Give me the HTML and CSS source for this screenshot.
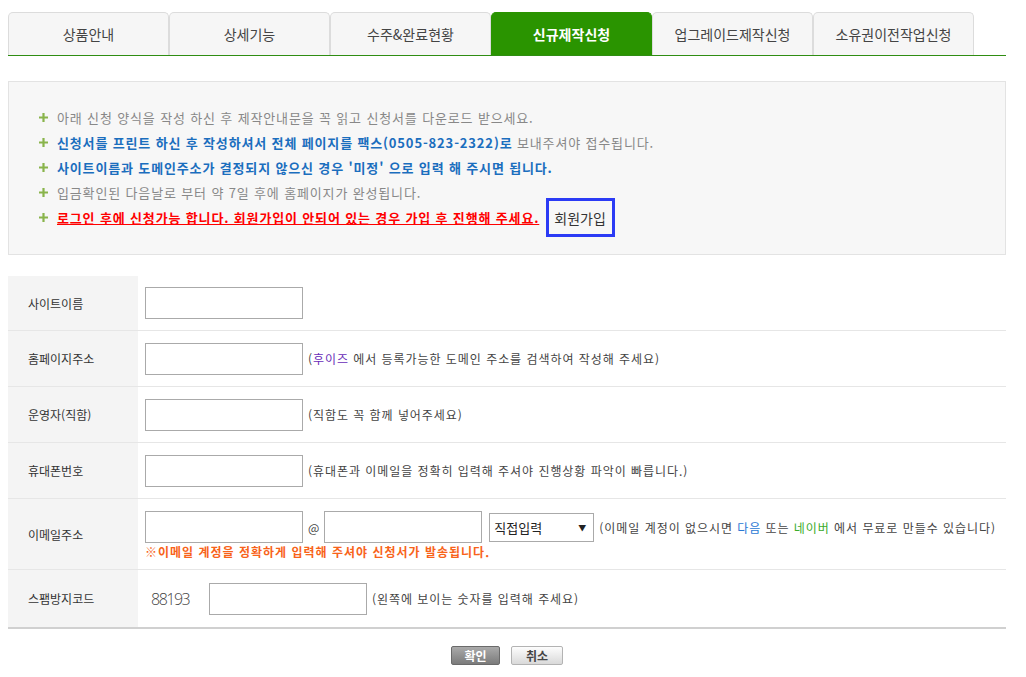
FILE: index.html
```html
<!DOCTYPE html>
<html lang="ko">
<head>
<meta charset="utf-8">
<title>신규제작신청</title>
<link rel="stylesheet" href="styles.css">
</head>
<body>
<div class="wrap">
  <ul class="tabs">
    <li class="tab">상품안내</li>
    <li class="tab">상세기능</li>
    <li class="tab">수주&amp;완료현황</li>
    <li class="tab active">신규제작신청</li>
    <li class="tab">업그레이드제작신청</li>
    <li class="tab">소유권이전작업신청</li>
  </ul>

  <div class="notice">
    <p class="nline"><svg class="plus" viewBox="0 0 9 9"><path d="M4.5 0V9M0 4.5H9"/></svg><span class="gray">아래 신청 양식을 작성 하신 후 제작안내문을 꼭 읽고 신청서를 다운로드 받으세요.</span></p>
    <p class="nline"><svg class="plus" viewBox="0 0 9 9"><path d="M4.5 0V9M0 4.5H9"/></svg><span class="blue">신청서를 프린트 하신 후 작성하셔서 전체 페이지를 팩스(0505-823-2322)로</span><span class="gray">&nbsp;보내주셔야 접수됩니다.</span></p>
    <p class="nline"><svg class="plus" viewBox="0 0 9 9"><path d="M4.5 0V9M0 4.5H9"/></svg><span class="blue">사이트이름과 도메인주소가 결정되지 않으신 경우 '미정' 으로 입력 해 주시면 됩니다.</span></p>
    <p class="nline"><svg class="plus" viewBox="0 0 9 9"><path d="M4.5 0V9M0 4.5H9"/></svg><span class="gray">입금확인된 다음날로 부터 약 7일 후에 홈페이지가 완성됩니다.</span></p>
    <p class="nline"><svg class="plus" viewBox="0 0 9 9"><path d="M4.5 0V9M0 4.5H9"/></svg><span class="red">로그인 후에 신청가능 합니다. 회원가입이 안되어 있는 경우 가입 후 진행해 주세요.</span><a class="join">회원가입</a></p>
  </div>

  <div class="form">
    <div class="row r1">
      <div class="label">사이트이름</div>
      <div class="field"><input class="txt" type="text"></div>
    </div>
    <div class="row">
      <div class="label">홈페이지주소</div>
      <div class="field"><input class="txt" type="text"><span class="help">(<span class="purple">후이즈</span> 에서 등록가능한 도메인 주소를 검색하여 작성해 주세요)</span></div>
    </div>
    <div class="row">
      <div class="label">운영자(직함)</div>
      <div class="field"><input class="txt" type="text"><span class="help">(직함도 꼭 함께 넣어주세요)</span></div>
    </div>
    <div class="row">
      <div class="label">휴대폰번호</div>
      <div class="field"><input class="txt" type="text"><span class="help">(휴대폰과 이메일을 정확히 입력해 주셔야 진행상황 파악이 빠릅니다.)</span></div>
    </div>
    <div class="row r5">
      <div class="label">이메일주소</div>
      <div class="field col">
        <div class="mailline">
          <input class="txt" type="text"><span class="at">@</span><input class="txt" type="text">
          <span class="selwrap"><select class="sel"><option>직접입력</option></select></span>
          <span class="help">(이메일 계정이 없으시면 <span class="dblue">다음</span> 또는 <span class="green">네이버</span> 에서 무료로 만들수 있습니다)</span>
        </div>
        <p class="warn">※이메일 계정을 정확하게 입력해 주셔야 신청서가 발송됩니다.</p>
      </div>
    </div>
    <div class="row r6">
      <div class="label">스팸방지코드</div>
      <div class="field"><span class="captcha">88193</span><input class="txt" type="text"><span class="help">(왼쪽에 보이는 숫자를 입력해 주세요)</span></div>
    </div>
  </div>

  <div class="btns">
    <button class="btn ok" type="button">확인</button>
    <button class="btn cancel" type="button">취소</button>
  </div>
</div>
</body>
</html>
```

FILE: styles.css
```css
* { box-sizing: border-box; }
body {
  margin: 8px;
  background: #fff;
  font-family: "Noto Sans CJK KR", "Noto Sans", sans-serif;
  color: #333;
}
.wrap { width: 998px; margin-top: 4px; }

.tabs {
  list-style: none;
  margin: 0;
  padding: 0;
  display: flex;
  border-bottom: 1px solid #2f8d12;
}
.tab {
  width: 161px;
  height: 43px;
  border: 1px solid #dcdcdc;
  border-bottom: none;
  border-radius: 5px 5px 0 0;
  background: #f6f6f6;
  color: #444;
  font-size: 14px;
  display: flex;
  align-items: center;
  justify-content: center;
}
.tab.active {
  background: #2a9400;
  border-color: #2a9400;
  color: #fff;
  font-weight: bold;
}

.notice {
  margin-top: 25px;
  height: 174px;
  border: 1px solid #e3e3e3;
  background: #f7f7f7;
  padding: 23px 0 0 30px;
  font-size: 13px;
  letter-spacing: 0.85px;
}
.nline {
  margin: 0;
  height: 25px;
  display: flex;
  align-items: center;
  white-space: nowrap;
}
.plus {
  width: 9px;
  height: 9px;
  margin-right: 9px;
  flex: none;
}
.plus path { stroke: #89b44b; stroke-width: 2.2; fill: none; }
.gray { color: #888; }
.blue { color: #1b6ebe; font-weight: bold; }
.red { color: #f00; font-weight: bold; text-decoration: underline; }
.join {
  flex: none;
  display: flex;
  align-items: center;
  height: 39px;
  margin: 0 0 0 7px;
  padding: 0 6px 0 5px;
  border: 3px solid #2b3bf5;
  color: #333;
  font-size: 14px;
  letter-spacing: 0;
}

.form {
  margin-top: 21px;
  border-bottom: 2px solid #d0d0d0;
  font-size: 12px;
}
.row {
  display: flex;
  height: 56px;
  border-bottom: 1px solid #e6e6e6;
}
.row.r1 { height: 55px; }
.row.r5 { height: 71px; }
.row.r6 { height: 57px; border-bottom: none; }
.label {
  width: 130px;
  flex: none;
  background: #f4f4f4;
  padding-left: 20px;
  display: flex;
  align-items: center;
  color: #333;
}
.field {
  flex: 1;
  display: flex;
  align-items: center;
  padding-left: 7px;
  color: #444;
}
.field.col {
  flex-direction: column;
  align-items: flex-start;
  justify-content: flex-start;
  padding-top: 12px;
}
.txt {
  width: 158px;
  height: 32px;
  border: 1px solid #aaa;
  margin: 0;
  padding: 0 4px;
  background: #fff;
  flex: none;
}
.help { margin-left: 5px; white-space: nowrap; letter-spacing: 0.95px; }
.purple { color: #6a2cb8; }
.dblue { color: #2a78d4; }
.green { color: #3aab2a; }

.mailline { display: flex; align-items: center; }
.at { margin: 0 5px; font-size: 12px; color: #444; }
.selwrap {
  position: relative;
  margin-left: 7px;
  display: inline-block;
}
.selwrap::after {
  content: "▼";
  position: absolute;
  right: 8px;
  top: 9px;
  font-size: 8px;
  color: #222;
  pointer-events: none;
}
.sel {
  appearance: none;
  -webkit-appearance: none;
  width: 105px;
  height: 29px;
  border: 1px solid #aaa;
  border-radius: 0;
  background: #fff;
  padding: 0 4px;
  font-family: "Noto Sans CJK KR", sans-serif;
  font-size: 13px;
  color: #222;
}
.warn {
  margin: 1px 0 0;
  color: #f8631a;
  font-weight: bold;
  font-size: 12px;
  line-height: 16px;
  letter-spacing: 1px;
}

.captcha {
  width: 64px;
  flex: none;
  padding-left: 6px;
  font-family: "Open Sans", "DejaVu Sans", sans-serif;
  font-weight: 300;
  font-size: 16px;
  letter-spacing: -1.5px;
  color: #444;
}

.btns {
  display: flex;
  justify-content: center;
  gap: 11px;
  margin-top: 17px;
}
.btn {
  height: 19px;
  padding: 0;
  border-radius: 2px;
  font-family: "Noto Sans CJK KR", sans-serif;
  font-size: 12px;
  font-weight: bold;
  line-height: 17px;
}
.btn.ok {
  width: 49px;
  background: linear-gradient(#aaaaaa, #7b7b7b);
  border: 1px solid #6a6a6a;
  color: #fff;
}
.btn.cancel {
  width: 52px;
  background: linear-gradient(#fdfdfd, #d9d9d9);
  border: 1px solid #b3b3b3;
  color: #444;
}
```
